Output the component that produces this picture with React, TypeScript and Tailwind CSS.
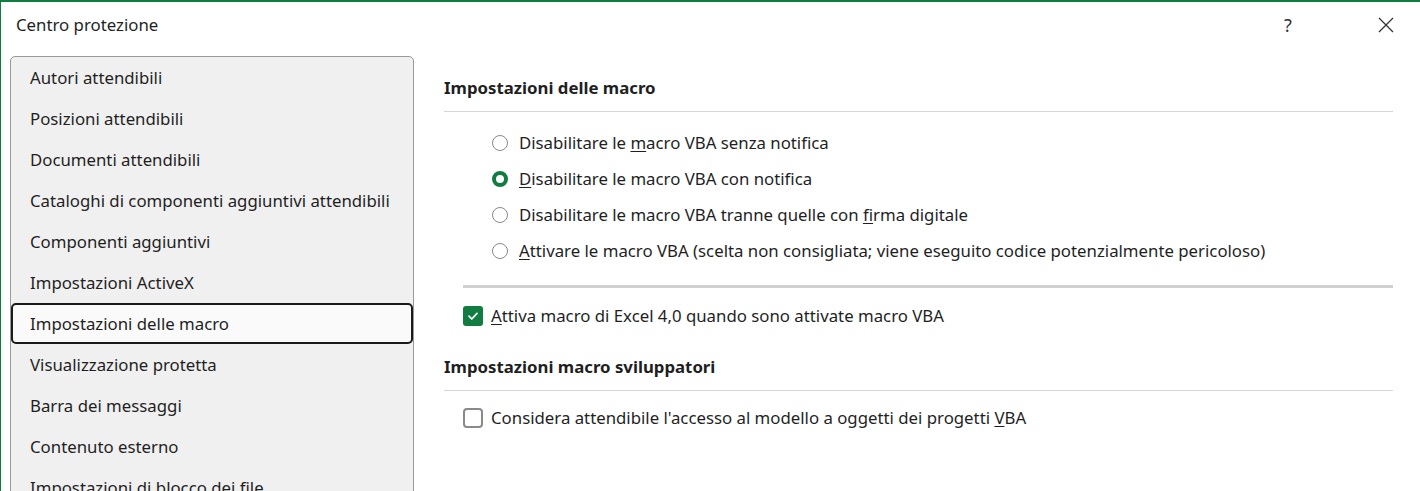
import React from "react";

const items = [
  "Autori attendibili",
  "Posizioni attendibili",
  "Documenti attendibili",
  "Cataloghi di componenti aggiuntivi attendibili",
  "Componenti aggiuntivi",
  "Impostazioni ActiveX",
  "Impostazioni delle macro",
  "Visualizzazione protetta",
  "Barra dei messaggi",
  "Contenuto esterno",
  "Impostazioni di blocco dei file",
];

function Radio({ checked }: { checked?: boolean }) {
  return checked ? (
    <span className="box-border h-4 w-4 shrink-0 rounded-full border-[4px] border-[#107c41] bg-white" />
  ) : (
    <span className="box-border h-4 w-4 shrink-0 rounded-full border border-[#8a8a8a] bg-white" />
  );
}

function Check({ checked }: { checked?: boolean }) {
  if (!checked) {
    return <span className="box-border h-5 w-5 shrink-0 rounded-[4px] border-2 border-[#8a8a8a] bg-white" />;
  }
  return (
    <span className="flex h-5 w-5 shrink-0 items-center justify-center rounded-[3px] bg-[#107c41]">
      <svg width="12" height="12" viewBox="0 0 12 12">
        <path d="M2 6.2 L4.8 9 L10 3.4" fill="none" stroke="white" strokeWidth="1.7" strokeLinecap="round" strokeLinejoin="round" />
      </svg>
    </span>
  );
}

export default function App() {
  return (
    <div
      className="box-border h-[491px] w-[1420px] overflow-hidden border-l border-t-2 border-[#107c41] bg-white text-[16.8px] text-[#1f1f1f]"
      style={{ fontFamily: '"Noto Sans", "Open Sans", sans-serif' }}
    >
      {/* barra del titolo */}
      <div className="flex h-[54px] items-center justify-between pl-[15px]">
        <span className="-mt-[8px]">Centro protezione</span>
        <div className="-mt-[8px] flex items-center">
          <span className="w-[40px] text-center text-[18px] text-[#333]">?</span>
          <span className="ml-[70px] mr-[26px] flex h-4 w-4 items-center justify-center">
            <svg width="16" height="16" viewBox="0 0 16 16">
              <path d="M1 1 L15 15 M15 1 L1 15" stroke="#333" strokeWidth="1.3" />
            </svg>
          </span>
        </div>
      </div>

      <div className="flex">
        {/* elenco categorie */}
        <div className="ml-[9px] box-border h-[460px] w-[404px] shrink-0 rounded-[5px] border border-[#9a9a9a] bg-[#f0f0f0]">
          {items.map((it) =>
            it === "Impostazioni delle macro" ? (
              <div key={it} className="box-border flex h-[41px] items-center rounded-[5px] border-2 border-[#1a1a1a] bg-[#fafafa] pl-[17px]">
                {it}
              </div>
            ) : (
              <div key={it} className="flex h-[41px] items-center pl-[19px]">
                {it}
              </div>
            )
          )}
        </div>

        {/* impostazioni */}
        <div className="ml-[30px] w-[949px]">
          <div className="h-[56px] border-b border-[#d6d6d6] pt-[20px] font-bold leading-6">Impostazioni delle macro</div>

          <div className="mt-[13px] pl-[48px]">
            <div className="flex h-9 items-center gap-[11px]">
              <Radio />
              <span>Disabilitare le <u className="underline-offset-2">m</u>acro VBA senza notifica</span>
            </div>
            <div className="flex h-9 items-center gap-[11px]">
              <Radio checked />
              <span><u className="underline-offset-2">D</u>isabilitare le macro VBA con notifica</span>
            </div>
            <div className="flex h-9 items-center gap-[11px]">
              <Radio />
              <span>Disabilitare le macro VBA tranne quelle con <u className="underline-offset-2">f</u>irma digitale</span>
            </div>
            <div className="flex h-9 items-center gap-[11px]">
              <Radio />
              <span><u className="underline-offset-2">A</u>ttivare le macro VBA (scelta non consigliata; viene eseguito codice potenzialmente pericoloso)</span>
            </div>
          </div>

          <div className="ml-[19px] mt-[16px] h-[3px] bg-[#d0d0d0]" />

          <div className="ml-[19px] mt-[10px] flex h-9 items-center gap-[8px]">
            <Check checked />
            <span><u className="underline-offset-2">A</u>ttiva macro di Excel 4,0 quando sono attivate macro VBA</span>
          </div>

          <div className="h-[57px] border-b border-[#d6d6d6] pt-[21px] font-bold leading-6">Impostazioni macro sviluppatori</div>

          <div className="ml-[19px] mt-[9px] flex h-9 items-center gap-[8px]">
            <Check />
            <span>Considera attendibile l'accesso al modello a oggetti dei progetti <u className="underline-offset-2">V</u>BA</span>
          </div>
        </div>
      </div>
    </div>
  );
}
